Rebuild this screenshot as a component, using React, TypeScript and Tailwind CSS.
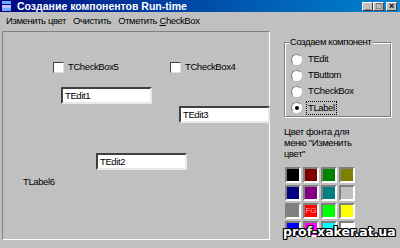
import React from "react";

const colors = [
  "#000000", "#800000", "#008000", "#808000",
  "#000080", "#800080", "#008080", "#c0c0c0",
  "#808080", "#ff0000", "#00ff00", "#ffff00",
  "#0000ff", "#ff00ff", "#00ffff", "#ffffff",
];

const sunken = "border border-t-[#808080] border-l-[#808080] border-b-white border-r-white";

const CheckBox = ({ label, x, y }: { label: string; x: number; y: number }) => (
  <div className="absolute flex items-center gap-[4px] whitespace-nowrap" style={{ left: x, top: y }}>
    <div className="w-[11px] h-[11px] bg-white border border-t-[#404040] border-l-[#404040] border-b-[#dfdfdf] border-r-[#dfdfdf]" />
    <span>{label}</span>
  </div>
);

const Edit = ({ text, x, y }: { text: string; x: number; y: number }) => (
  <div
    className="absolute w-[91px] h-[17px] bg-white border-2 border-t-[#404040] border-l-[#404040] border-b-[#e8e8e8] border-r-[#e8e8e8] pl-[2px] leading-[13px]"
    style={{ left: x, top: y }}
  >
    {text}
  </div>
);

const Radio = ({ label, checked }: { label: string; checked?: boolean }) => (
  <div className="flex items-center gap-[4px] h-[15px] whitespace-nowrap">
    <div className="w-[11px] h-[11px] rounded-full bg-white border border-t-[#808080] border-l-[#808080] border-b-white border-r-white flex items-center justify-center">
      {checked && <div className="w-[4px] h-[4px] rounded-full bg-black" />}
    </div>
    <span className={checked ? "border border-dotted border-black px-[1px] leading-[12px]" : "px-[2px]"}>{label}</span>
  </div>
);

export default function App() {
  return (
    <div className="relative w-[400px] h-[248px] bg-[#c0c0c0] overflow-hidden flex flex-col text-[9.5px] tracking-[-0.4px] text-black [font-family:'Liberation_Sans',Arial,sans-serif]">
      {/* title bar */}
      <div className="h-[12px] flex items-center bg-gradient-to-r from-[#000080] to-[#1084d0] pl-[2px] pr-[3px]">
        <div className="w-[9px] h-[10px] flex flex-col justify-between mr-[6px]">
          <div className="h-[3px] bg-[#6fa8ff]" />
          <div className="h-[3px] bg-[#c0c0ff]" />
          <div className="h-[3px] bg-[#6fa8ff]" />
        </div>
        <span className="text-white font-bold text-[10.5px] tracking-normal leading-none whitespace-nowrap">Создание компонентов Run-time</span>
        <div className="ml-auto flex items-center">
          {["_", "□", "×"].map((g, i) => (
            <div
              key={i}
              className={`w-[11px] h-[9px] bg-[#c0c0c0] border border-t-white border-l-white border-b-[#404040] border-r-[#404040] flex items-center justify-center text-[9px] leading-none font-bold ${i === 2 ? "ml-[2px]" : ""}`}
            >
              {g}
            </div>
          ))}
        </div>
      </div>

      {/* menu */}
      <div className="h-[16px] flex items-center gap-[7px] pl-[6px] pt-[2px] whitespace-nowrap">
        <span>Изменить цвет</span>
        <span>Очистить</span>
        <span>
          Отметить <span className="underline">C</span>heckBox
        </span>
      </div>

      <div className="flex pt-[3px] pl-[2px]">
        {/* runtime canvas */}
        <div className={`relative w-[268px] h-[209px] ${sunken}`}>
          <CheckBox label="TCheckBox5" x={50} y={28} />
          <CheckBox label="TCheckBox4" x={167} y={28} />
          <Edit text="TEdit1" x={58} y={55} />
          <Edit text="TEdit3" x={176} y={74} />
          <Edit text="TEdit2" x={93} y={121} />
          <span className="absolute left-[20px] top-[143px]">TLabel6</span>
        </div>

        {/* right side */}
        <div className="flex flex-col pl-[14px]">
          <div className="relative mt-[11px] w-[108px] h-[76px] border border-t-[#808080] border-l-[#808080] border-b-white border-r-white">
            <div className="h-full w-full border border-t-white border-l-white border-b-[#808080] border-r-[#808080] pl-[5px] pt-[8px] flex flex-col gap-[1px]">
              <Radio label="TEdit" />
              <Radio label="TButtom" />
              <Radio label="TCheckBox" />
              <Radio label="TLabel" checked />
            </div>
            <span className="absolute left-[4px] -top-[7px] bg-[#c0c0c0] px-[1px] leading-[12px] whitespace-nowrap">Создаем компонент</span>
          </div>

          <div className="mt-[8px] leading-[11px] w-[110px] whitespace-nowrap">
            Цвет фонта для
            <br />
            меню "Изменить
            <br />
            цвет"
          </div>

          <div className="mt-[8px] grid grid-cols-[repeat(4,16px)] gap-[2px] ml-[1px]">
            {colors.map((c, i) => (
              <div
                key={i}
                className="w-[16px] h-[16px] border-2 border-t-[#808080] border-l-[#808080] border-b-white border-r-white flex items-center justify-center text-[8px] tracking-normal text-[#ffb0b0] leading-none"
                style={{ backgroundColor: c }}
              >
                {i === 9 ? "FG" : ""}
              </div>
            ))}
          </div>
        </div>
      </div>

      <span className="absolute left-[283px] top-[226px] whitespace-nowrap text-white font-bold text-[12.5px] tracking-normal leading-none [font-family:'DejaVu_Sans',sans-serif] [text-shadow:1px_1px_0_#000,-1px_-1px_0_#000,1px_-1px_0_#000,-1px_1px_0_#000,0_1px_0_#000,1px_0_0_#000,0_-1px_0_#000,-1px_0_0_#000]">
        prof-xaker.at.ua
      </span>
    </div>
  );
}
